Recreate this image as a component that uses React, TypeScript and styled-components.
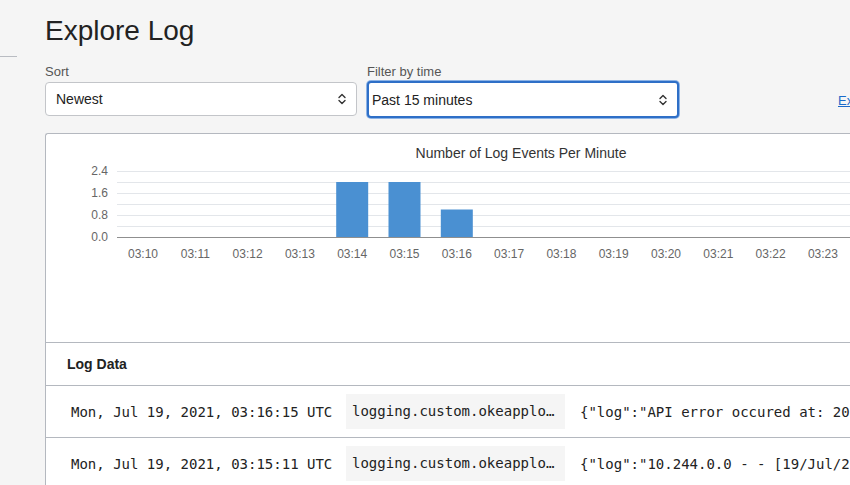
import React from "react";
import styled, { createGlobalStyle } from "styled-components";

const Global = createGlobalStyle`
  html, body { margin: 0; padding: 0; background: #f5f5f5; overflow: hidden; }
  body { font-family: "Liberation Sans", Arial, sans-serif; color: #222; }
`;

const Page = styled.div`
  display: flex;
  width: 850px;
  height: 485px;
  overflow: hidden;
`;

const Sidebar = styled.div`
  flex: 0 0 17px;
  padding-top: 56px;
`;

const SidebarRule = styled.div`
  height: 1px;
  background: #b9bcc2;
`;

const Main = styled.main`
  flex: 0 0 auto;
  width: 900px;
  padding-left: 28px;
`;

const Title = styled.h1`
  margin: 0;
  padding-top: 15px;
  height: 59px;
  box-sizing: border-box;
  font-size: 28px;
  font-weight: 400;
  line-height: 32px;
  color: #222;
`;

const Filters = styled.div`
  display: flex;
  align-items: flex-start;
  gap: 10px;
  height: 72px;
`;

const Field = styled.div`
  display: flex;
  flex-direction: column;
  width: 312px;
`;

const Label = styled.label`
  font-size: 13px;
  line-height: 16px;
  color: #555;
  margin-top: 5px;
  height: 17px;
`;

const Select = styled.div<{ $focused?: boolean }>`
  display: flex;
  align-items: center;
  justify-content: space-between;
  box-sizing: border-box;
  height: ${(p) => (p.$focused ? "37px" : "34px")};
  margin-top: ${(p) => (p.$focused ? "0" : "1px")};
  padding: 0 9px 0 ${(p) => (p.$focused ? "3px" : "10px")};
  background: #fff;
  border: ${(p) => (p.$focused ? "2px solid #2e6fc7" : "1px solid #c3c5c9")};
  border-radius: 4px;
  font-size: 14px;
  color: #222;
  box-shadow: ${(p) => (p.$focused ? "0 0 0 1px #8cb3e6" : "none")};
`;

const Chevrons = () => (
  <svg width="10" height="14" viewBox="0 0 10 14" fill="none" stroke="#333" strokeWidth="1.4" strokeLinecap="round" strokeLinejoin="round">
    <path d="M2 5.5 L5 2.5 L8 5.5" />
    <path d="M2 8.5 L5 11.5 L8 8.5" />
  </svg>
);

const ExportLink = styled.a`
  margin-left: 149px;
  margin-top: 34px;
  font-size: 13px;
  color: #1b6ac9;
  text-decoration: underline;
`;

const Card = styled.section`
  background: #fff;
  border: 1px solid #b4b8bf;
  border-right: none;
  border-radius: 3px 0 0 0;
  margin-top: 2px;
`;

const ChartArea = styled.div`
  height: 208px;
  border-bottom: 1px solid #b4b8bf;
  overflow: hidden;
`;

const SectionHeader = styled.div`
  height: 42px;
  display: flex;
  align-items: center;
  padding-left: 21px;
  font-size: 14px;
  font-weight: 700;
  color: #222;
  border-bottom: 1px solid #b4b8bf;
`;

const Row = styled.div`
  display: flex;
  align-items: center;
  height: 51px;
  border-bottom: 1px solid #b4b8bf;
  font-family: "DejaVu Sans Mono", monospace;
  font-size: 14px;
  color: #222;
  white-space: nowrap;
`;

const Time = styled.span`
  padding-left: 25px;
  width: 275px;
  flex: 0 0 auto;
  box-sizing: content-box;
`;

const Source = styled.span`
  flex: 0 0 auto;
  box-sizing: border-box;
  width: 219px;
  height: 35px;
  line-height: 35px;
  padding: 0 6px;
  background: #f5f5f5;
  overflow: hidden;
  text-overflow: ellipsis;
`;

const Message = styled.span`
  padding-left: 15px;
`;

const labels = ["03:10","03:11","03:12","03:13","03:14","03:15","03:16","03:17","03:18","03:19","03:20","03:21","03:22","03:23","03:24"];
const values = [0,0,0,0,2,2,1,0,0,0,0,0,0,0,0];

const Chart = () => {
  const ox = 71;
  const baseY = 103;
  const h = 66;
  const step = 52.3;
  const gridYs = [0,1,2,3,4,5].map((i) => baseY - (h / 6) * (6 - i));
  return (
    <svg width="860" height="208" viewBox="0 0 860 208" fontFamily="Liberation Sans, Arial, sans-serif">
      <text x="475" y="24" textAnchor="middle" fontSize="14" fill="#333">Number of Log Events Per Minute</text>
      {gridYs.map((y, i) => (
        <line key={i} x1={ox} x2="860" y1={y + 0.5} y2={y + 0.5} stroke="#e3e6ea" strokeWidth="1" />
      ))}
      {[["2.4", 37], ["1.6", 59], ["0.8", 81], ["0.0", 103]].map(([t, y]) => (
        <text key={t as string} x="62" y={(y as number) + 4} textAnchor="end" fontSize="12" fill="#666">{t}</text>
      ))}
      {values.map((v, i) =>
        v > 0 ? (
          <rect key={i} x={ox + i * step + 10} y={baseY - (v / 2.4) * h} width="32" height={(v / 2.4) * h} fill="#4a90d2" />
        ) : null
      )}
      <line x1={ox} x2="860" y1={baseY + 0.5} y2={baseY + 0.5} stroke="#8f8f8f" strokeWidth="1" />
      {labels.map((l, i) => (
        <text key={l} x={ox + i * step + 26} y="124" textAnchor="middle" fontSize="12" fill="#666">{l}</text>
      ))}
    </svg>
  );
};

const rows = [
  { t: "Mon, Jul 19, 2021, 03:16:15 UTC", s: "logging.custom.okeapplogs", m: '{"log":"API error occured at: 2021-07-19T03:16:15Z"}' },
  { t: "Mon, Jul 19, 2021, 03:15:11 UTC", s: "logging.custom.okeapplogs", m: '{"log":"10.244.0.0 - - [19/Jul/2021:03:15:11 +0000]"}' },
];

export default function App() {
  return (
    <>
      <Global />
      <Page>
        <Sidebar>
          <SidebarRule />
        </Sidebar>
        <Main>
          <Title>Explore Log</Title>
          <Filters>
            <Field>
              <Label>Sort</Label>
              <Select>
                <span>Newest</span>
                <Chevrons />
              </Select>
            </Field>
            <Field>
              <Label>Filter by time</Label>
              <Select $focused>
                <span>Past 15 minutes</span>
                <Chevrons />
              </Select>
            </Field>
            <ExportLink href="#">Export</ExportLink>
          </Filters>
          <Card>
            <ChartArea>
              <Chart />
            </ChartArea>
            <SectionHeader>Log Data</SectionHeader>
            {rows.map((r) => (
              <Row key={r.t}>
                <Time>{r.t}</Time>
                <Source>{r.s}</Source>
                <Message>{r.m}</Message>
              </Row>
            ))}
          </Card>
        </Main>
      </Page>
    </>
  );
}
